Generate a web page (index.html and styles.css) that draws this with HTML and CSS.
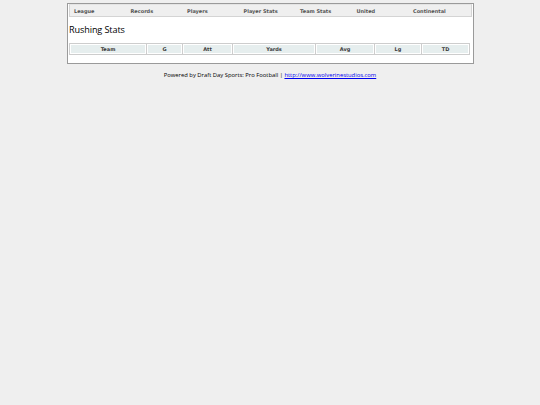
FILE: index.html
```html
<!DOCTYPE html>
<html>
<head>
<meta charset="utf-8">
<link rel="stylesheet" href="styles.css">
</head>
<body>
<div class="page">
  <div class="nav">
    <span class="nav-item">League</span>
    <span class="nav-item">Records</span>
    <span class="nav-item">Players</span>
    <span class="nav-item">Player Stats</span>
    <span class="nav-item">Team Stats</span>
    <span class="nav-item">United</span>
    <span class="nav-item">Continental</span>
  </div>
  <h1 class="title">Rushing Stats</h1>
  <table class="stats">
    <thead>
      <tr>
        <th class="c-team">Team</th>
        <th class="c-g">G</th>
        <th class="c-att">Att</th>
        <th class="c-yds">Yards</th>
        <th class="c-avg">Avg</th>
        <th class="c-lg">Lg</th>
        <th class="c-td">TD</th>
      </tr>
    </thead>
  </table>
</div>
<p class="footer">Powered by Draft Day Sports: Pro Football | <a href="#">http://www.wolverinestudios.com</a></p>
</body>
</html>
```
FILE: styles.css
```css
html, body {
  margin: 0;
  padding: 0;
  background: #efefef;
}
.page {
  width: 403px;
  margin: 3px 0 0 67px;
  border: 1px solid #9a9a9a;
  background: #fff;
  padding: 0 1px 8px 1px;
  box-sizing: content-box;
}
.nav {
  display: flex;
  height: 11px;
  align-items: center;
  background: #efefef;
  border: 1px solid #d4d4d4;
  border-top-color: #e4e4e4;
}
.nav-item {
  width: 56.5px;
  padding-left: 4px;
  box-sizing: border-box;
  font-family: "DejaVu Sans", Verdana, sans-serif;
  font-weight: bold;
  font-size: 5px;
  color: #555;
}
.nav-item:last-child {
  flex: 1;
}
.title {
  margin: 6px 0 0 0;
  font-family: "Open Sans", sans-serif;
  font-weight: normal;
  font-size: 9.1px;
  line-height: 13px;
  color: #000;
  letter-spacing: -0.1px;
}
.stats {
  margin: 7px 0 0 0;
  width: 401px;
  border-collapse: separate;
  border-spacing: 1px;
  background: #cdcdcd;
  table-layout: fixed;
}
.stats th {
  background: #e6eeee;
  border: 1px solid #fff;
  height: 8px;
  padding: 0;
  font-family: "DejaVu Sans", Verdana, sans-serif;
  font-weight: bold;
  font-size: 5px;
  color: #3a3a3a;
  text-align: center;
}
.c-team { width: 74px; }
.c-g { width: 33px; }
.c-att { width: 47px; }
.c-yds { width: 80px; }
.c-avg { width: 56px; }
.c-lg { width: 44px; }
.footer {
  margin: 7px 0 0 0;
  text-align: center;
  font-family: "Open Sans", sans-serif;
  font-size: 5.85px;
  color: #000;
}
.footer a {
  color: #0000ee;
}
```
